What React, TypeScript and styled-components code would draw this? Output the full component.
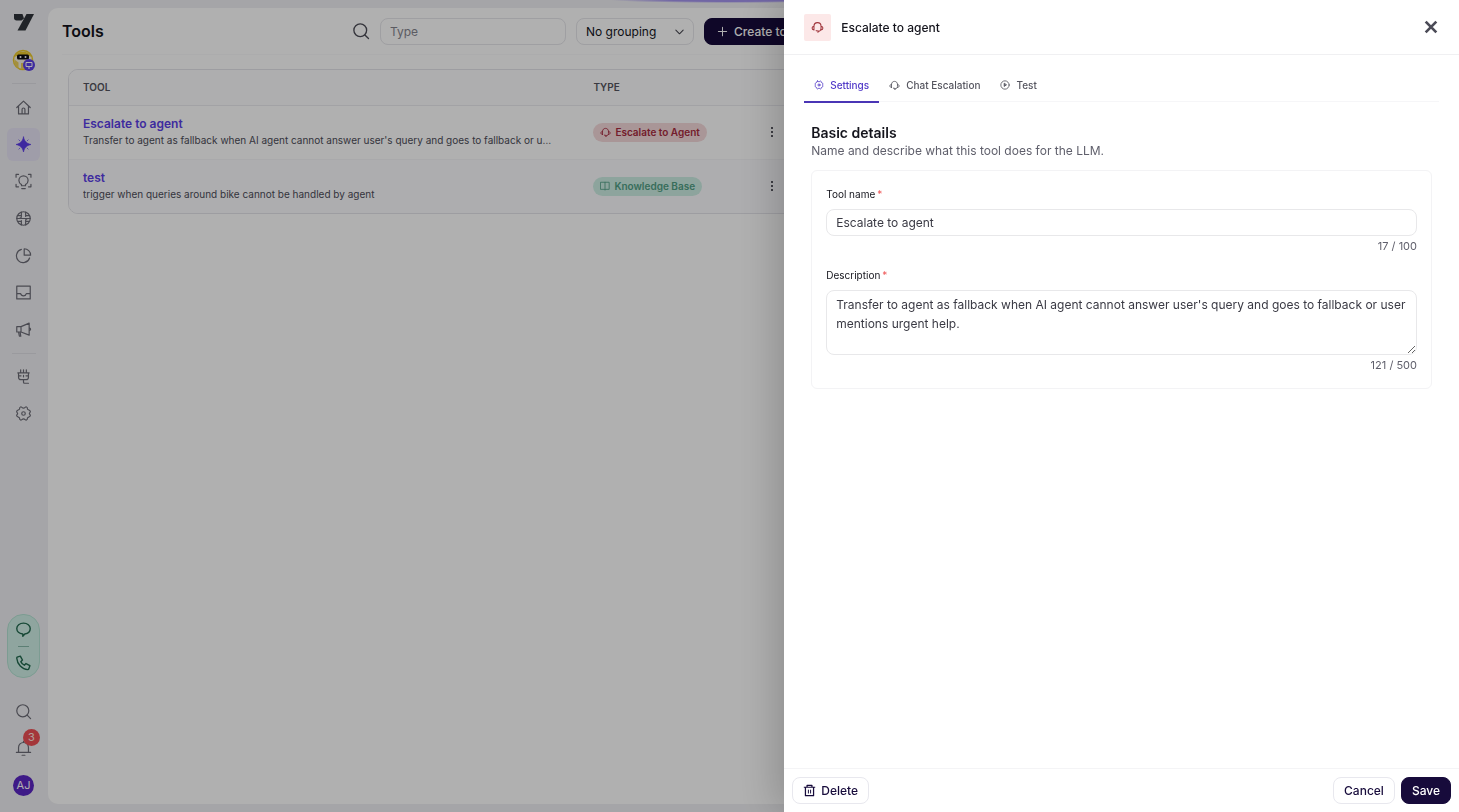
import React, { useState } from "react";
import styled, { createGlobalStyle, css } from "styled-components";

const GlobalStyle = createGlobalStyle`
  *, *::before, *::after { box-sizing: border-box; }
  body {
    margin: 0;
    font-family: Inter, "Liberation Sans", sans-serif;
    font-size: 12px;
    color: #14141c;
    background: #f0f0f3;
  }
  button, input, select, textarea { font: inherit; color: inherit; margin: 0; }
  h1, h2, p { margin: 0; }
`;

/* ---------- icons ---------- */

type IconProps = { size?: number; weight?: number; children?: React.ReactNode };

const Icon = ({ size = 17, weight = 1.7, children }: IconProps) => (
  <svg
    width={size}
    height={size}
    viewBox="0 0 24 24"
    fill="none"
    stroke="currentColor"
    strokeWidth={weight}
    strokeLinecap="round"
    strokeLinejoin="round"
    aria-hidden="true"
  >
    {children}
  </svg>
);

const SearchIcon = (p: IconProps) => (
  <Icon {...p}>
    <circle cx="11" cy="11" r="8.5" />
    <path d="M17.2 17.2 22 22" />
  </Icon>
);
const HomeIcon = () => (
  <Icon>
    <path d="M2.500 12 12 3l9.500 9M5 10v11h14V10M10 21v-6.500c0-1 .8-1.800 2-1.800s2 .8 2 1.800V21" />
  </Icon>
);
const SparkIcon = () => (
  <Icon weight={1}>
    <path
      fill="currentColor"
      d="M12 1.500c1.400 6.200 4 9 10.500 10.500-6.500 1.500-9.100 4.300-10.500 10.500-1.400-6.200-4-9-10.500-10.500 6.500-1.500 9.100-4.300 10.500-10.500z"
    />
    <path d="M5.500 5.500l1.500 1.500M18.500 5.500 17 7M5.500 18.500 7 17M18.500 18.500 17 17" />
  </Icon>
);
const BulbIcon = () => (
  <Icon>
    <path d="M9.200 18v-1.600C7.300 15.300 5.500 13.300 5.500 10.500a6.500 6.500 0 0 1 13 0c0 2.800-1.800 4.800-3.700 5.900V18zM9.500 22h5" />
    <path d="M1.500 6V2H5M22.500 6V2H19M1.500 16v3.500H5M22.500 16v3.500H19" />
  </Icon>
);
const GlobeIcon = () => (
  <Icon>
    <circle cx="12" cy="12" r="9.500" />
    <path d="M2.500 12h19M9 3v6.500a2 2 0 0 1-2 2M9 21v-6M15 3v6M15 21v-6.500a2 2 0 0 1 2-2M4 8h5M15 8h5M4 16h5M15 16h5" />
  </Icon>
);
const PieIcon = () => (
  <Icon>
    <path d="M13 2.500a9 9 0 0 1 9 9h-9z" />
    <path d="M9 3.400A9.500 9.500 0 1 0 20.600 15.500" />
  </Icon>
);
const InboxIcon = () => (
  <Icon>
    <path d="M2.500 3h19v18h-19zM2.500 13.500H8c.5 2 2 3.200 4 3.200s3.500-1.200 4-3.200h5.500" />
  </Icon>
);
const MegaphoneIcon = () => (
  <Icon>
    <path d="M2.500 8h6L20 3v17L8.500 15.500h-6zM8.500 8v7.500M5 15.500l1.200 6h2l-1-6M20 9.500c1.300.3 2 1.100 2 2s-.7 1.700-2 2" />
  </Icon>
);
const PlugIcon = () => (
  <Icon>
    <path d="M8 2.500V7M12 2.500V7M16 2.500V7M4 7h16M5 7v6c0 2 1.500 3.500 3.500 3.500h7c2 0 3.500-1.500 3.500-3.500V7M5 11h3.500M15.500 11H19M12 10.500v2M12 16.500V20c0 1 .6 1.500 1.500 1.500H19" />
  </Icon>
);
const GearIcon = ({ size = 17, weight = 1.7 }: IconProps) => (
  <Icon size={size} weight={weight}>
    <path d="M8.300 2.500c1.200 0 1.800 1.900 3.700 1.900s2.500-1.900 3.700-1.900c1.600.6 2.200 1.600 1.900 3.200 1 1.600 3.300 1.300 4 3 .4 1.600-1.300 2-1.300 3.300s1.700 1.700 1.300 3.300c-.7 1.700-3 1.400-4 3 .3 1.600-.3 2.600-1.900 3.200-1.200 0-1.800-1.900-3.700-1.900s-2.500 1.900-3.700 1.900c-1.600-.6-2.200-1.600-1.900-3.200-1-1.600-3.300-1.300-4-3-.4-1.600 1.300-2 1.300-3.300S2 10.300 2.400 8.700c.7-1.700 3-1.400 4-3-.3-1.600.3-2.600 1.900-3.200z" />
    <circle cx="12" cy="12" r="2.500" />
  </Icon>
);
const HeadsetIcon = ({ size = 12, weight = 1.900 }: IconProps) => (
  <Icon size={size} weight={weight}>
    <path d="M5.500 16.500V9.800C5.500 5.800 8.300 3 12 3s6.500 2.800 6.500 6.800V14c0 3-2 5-5 5.500M5.500 9.500C3.300 9.800 2 11 2 13s1.300 3.200 3.500 3.500M18.500 9.500c2.200.3 3.500 1.500 3.500 3.500s-1.300 3.200-3.500 3.500M9.500 17.800l4 .7-.7 2.500" />
  </Icon>
);
const BookIcon = () => (
  <Icon size={10} weight={2}>
    <path d="M2 3h20v17h-8.500L12 22l-1.500-2H2zM12 3v18" />
  </Icon>
);
const PlayIcon = () => (
  <Icon size={10} weight={2}>
    <circle cx="12" cy="12" r="10" />
    <path fill="currentColor" d="M10 8.500v7l5-3.500z" />
  </Icon>
);
const BubbleIcon = () => (
  <Icon weight={2}>
    <path d="M12 3c5.500 0 9.500 3.300 9.500 7.700 0 4-3.200 7.100-7.700 7.600L11 21.500v-3.200C6 18 2.500 14.900 2.500 10.700 2.500 6.300 6.500 3 12 3z" />
  </Icon>
);
const PhoneIcon = () => (
  <Icon weight={2}>
    <path d="M3 4.500 7.500 3l3 5.500-2.300 2.300c1 2.200 2.800 4 5 5l2.300-2.300 5.500 3-1.500 4.500c-.3.600-.8 1-1.500 1C10 21.500 3 14 2.500 6c0-.7.100-1.200.5-1.500z" />
  </Icon>
);
const BellIcon = () => (
  <Icon>
    <path d="M5 17.500V10.500a7 7 0 0 1 14 0v7M2 17.500h20M10 21.500h4M12 3.500V2" />
  </Icon>
);
const PlusIcon = () => (
  <Icon size={11} weight={2.200}>
    <path d="M12 3v18M3 12h18" />
  </Icon>
);
const ChevronIcon = () => (
  <Icon size={11} weight={2.200}>
    <path d="m4 9 8 8 8-8" />
  </Icon>
);
const CloseIcon = () => (
  <Icon size={16} weight={4}>
    <path strokeLinecap="butt" d="M4 4l16 16M20 4 4 20" />
  </Icon>
);
const DotsIcon = () => (
  <svg width="4" height="12" viewBox="0 0 4 12" fill="currentColor" aria-hidden="true">
    <circle cx="2" cy="2" r="1.100" />
    <circle cx="2" cy="6" r="1.100" />
    <circle cx="2" cy="10" r="1.100" />
  </svg>
);
const TrashIcon = () => (
  <Icon size={13} weight={2.300}>
    <path strokeLinecap="butt" d="M1.500 6h21M7.500 6V2.500h9V6M4.500 6v15.500h15V6" />
    <path strokeLinecap="butt" strokeWidth="1.800" d="M10 10.500v7M14 10.500v7" />
  </Icon>
);
const Logo = () => (
  <svg width="20" height="17" viewBox="0 0 20 17" fill="#2f343b" aria-hidden="true">
    <path d="M0 0h8.500L10 4.500 7.500 6.500H2.500C1 6.500 0 5.500 0 4z" />
    <path d="M12.500 0H20L11.500 16.500H3.500z" />
  </svg>
);
const BotAvatar = () => (
  <svg width="24" height="24" viewBox="0 0 24 24" aria-hidden="true">
    <circle cx="11" cy="11" r="9.500" fill="#f7f2df" stroke="#ecc92a" strokeWidth="1.500" />
    <path d="M2.500 8C5 1 17 1 19.500 8l-2-1H4.500z" fill="#ecc92a" />
    <path d="M2.500 10.500v5l4 4v-6zM9 14h3v6H9z" fill="#ecd05a" />
    <rect x="5" y="5.500" width="12" height="5" rx="1.500" fill="#0c0c14" />
    <circle cx="8.500" cy="8" r="1" fill="#ffffff" />
    <circle cx="13.500" cy="8" r="1" fill="#ffffff" />
    <circle cx="17" cy="16" r="6" fill="#5b3fe6" />
    <path d="M14 13.500h6v4h-6zM16 19h2" fill="none" stroke="#ffffff" strokeWidth="1" />
  </svg>
);

/* ---------- page behind the drawer ---------- */

const Shell = styled.div`
  display: flex;
  height: 100vh;
  padding: 8px 8px 8px 0;
  overflow: hidden;
`;

const TopGlow = styled.div`
  position: absolute;
  top: 0;
  left: 50%;
  width: 240px;
  height: 6px;
  transform: translateX(-50%);
  background: radial-gradient(ellipse 50% 50% at 50% 0, #a494f0 0 50%, transparent 100%);
`;

const Sidebar = styled.aside`
  display: flex;
  flex: none;
  flex-direction: column;
  align-items: center;
  width: 48px;
  padding: 6px 1px 2px 0;
  color: #6c6c77;
`;

const LogoLink = styled.a`
  display: flex;
  margin-bottom: 18px;
`;

const BotButton = styled.button`
  display: flex;
  padding: 0;
  border: 0;
  background: none;
`;

const Divider = styled.hr<{ $tight?: boolean }>`
  width: 24px;
  height: 1px;
  margin: ${(p) => (p.$tight ? "7px 0 6px" : "10px 0 7px")};
  border: 0;
  background: #dfdfe5;
`;

const Nav = styled.nav`
  display: flex;
  flex-direction: column;
  align-items: center;
  gap: 4px;
`;

const NavLink = styled.a<{ $active?: boolean }>`
  display: grid;
  place-items: center;
  width: 33px;
  height: 33px;
  border-radius: 6px;
  color: ${(p) => (p.$active ? "#5b3ae8" : "inherit")};
  background: ${(p) => (p.$active ? "#e7e4f5" : "none")};
`;

const SidebarFoot = styled.div`
  display: flex;
  flex-direction: column;
  align-items: center;
  gap: 4px;
  margin-top: auto;
`;

const ChannelPill = styled.div`
  display: flex;
  flex-direction: column;
  align-items: center;
  justify-content: space-between;
  width: 33px;
  height: 64px;
  margin-bottom: 13px;
  padding: 6px 0;
  border: 1px solid #b4e2d4;
  border-radius: 16px;
  color: #22694f;
  background: #cff0e6;
`;

const PillButton = styled.button`
  display: flex;
  padding: 0;
  border: 0;
  background: none;
`;

const PillRule = styled.span`
  width: 11px;
  height: 1px;
  background: #86b9a8;
`;

const FootButton = styled.button`
  position: relative;
  display: grid;
  place-items: center;
  width: 33px;
  height: 33px;
  padding: 0;
  border: 0;
  background: none;
`;

const CountBadge = styled.span`
  position: absolute;
  top: -3px;
  right: 0;
  width: 17px;
  height: 17px;
  border-radius: 50%;
  font-size: 11px;
  line-height: 17px;
  text-align: center;
  color: #ffe9e0;
  background: #ee4f55;
`;

const UserDot = styled.span`
  width: 21px;
  height: 21px;
  border-radius: 50%;
  font-size: 11px;
  line-height: 21px;
  text-align: center;
  color: #ffffff;
  background: #5b26c4;
`;

const Main = styled.main`
  flex: 1;
  min-width: 0;
  border-radius: 10px;
  background: #ffffff;
`;

const MainHeader = styled.header`
  display: flex;
  align-items: center;
  gap: 10px;
  height: 47px;
  margin: 0 14px;
  border-bottom: 1px solid #f9f9fb;
`;

const PageTitle = styled.h1`
  flex: 0 0 280px;
  font-size: 16px;
  font-weight: 600;
  line-height: 20px;
`;

const SearchLabel = styled.label`
  display: flex;
  align-items: center;
  gap: 10px;
  color: #4c4c56;
`;

const control = css`
  height: 27px;
  border: 1px solid #e6e6eb;
  border-radius: 8px;
  background: #ffffff;
`;

const SearchInput = styled.input`
  ${control}
  width: 186px;
  padding: 0 9px;
  &::placeholder { color: #85858f; }
`;

const SelectBox = styled.div`
  display: grid;
  align-items: center;
  width: 118px;
  > * { grid-area: 1 / 1; }
  > svg { justify-self: end; margin-right: 9px; color: #44444e; pointer-events: none; }
`;

const Select = styled.select`
  ${control}
  width: 100%;
  padding: 0 9px;
  appearance: none;
`;

const Button = styled.button<{ $primary?: boolean }>`
  display: inline-flex;
  align-items: center;
  justify-content: center;
  gap: 5px;
  height: 27px;
  padding: 0 10px;
  border: 1px solid ${(p) => (p.$primary ? "#170b3b" : "#e8e8ee")};
  border-radius: 8px;
  font-weight: 500;
  white-space: nowrap;
  color: ${(p) => (p.$primary ? "#ffffff" : "#170b3b")};
  background: ${(p) => (p.$primary ? "#170b3b" : "#ffffff")};
`;

const CreateButton = styled(Button)`
  gap: 6px;
  padding: 0 12px;
`;

const TableCard = styled.div`
  margin: 14px 20px;
  border: 1px solid #e4e4ea;
  border-radius: 10px;
  overflow: hidden;
`;

const Table = styled.table`
  width: 100%;
  border-collapse: collapse;
  table-layout: fixed;
`;

const HeadCell = styled.th<{ $width?: string }>`
  width: ${(p) => p.$width ?? "auto"};
  height: 35px;
  padding: 0 14px;
  border-bottom: 1px solid #ebebf0;
  font-size: 10px;
  font-weight: 600;
  text-align: left;
  color: #55555f;
  background: #fdfdfe;
`;

const Row = styled.tr<{ $tint?: boolean }>`
  height: 54px;
  background: ${(p) => (p.$tint ? "#fbfbfe" : "#ffffff")};
  & + & { border-top: 1px solid #f5f5f8; }
`;

const Cell = styled.td`
  padding: 0 14px;
`;

const WideCell = styled(Cell)`
  padding-right: 25px;
`;

const ToolLink = styled.a`
  display: block;
  font-weight: 600;
  line-height: 16px;
  text-decoration: none;
  color: #5b3fe6;
`;

const ToolText = styled.p`
  overflow: hidden;
  font-size: 10px;
  line-height: 16px;
  white-space: nowrap;
  text-overflow: ellipsis;
  color: #4d4d59;
`;

const Tag = styled.span<{ $tone: "red" | "green" }>`
  display: flex;
  align-items: center;
  gap: 4px;
  width: max-content;
  height: 19px;
  padding: 0 7px;
  border-radius: 10px;
  font-size: 10px;
  font-weight: 600;
  white-space: nowrap;
  color: ${(p) => (p.$tone === "red" ? "#a82a40" : "#519f85")};
  background: ${(p) => (p.$tone === "red" ? "#f5dadb" : "#cdeee4")};
`;

const MenuButton = styled.button`
  display: flex;
  padding: 0;
  border: 0;
  color: #33333d;
  background: none;
`;

/* ---------- drawer ---------- */

const Scrim = styled.div`
  position: fixed;
  inset: 0;
  background: rgba(0, 0, 0, 0.31);
`;

const Drawer = styled.section`
  position: fixed;
  inset: 0 0 0 auto;
  display: flex;
  flex-direction: column;
  width: 46.25%;
  background: #ffffff;
  box-shadow: -6px 0 40px rgba(0, 0, 0, 0.22);
`;

const DrawerHeader = styled.header`
  display: flex;
  align-items: center;
  gap: 10px;
  height: 55px;
  padding: 0 20px;
  border-bottom: 1px solid #f0f0f2;
`;

const IconTile = styled.span`
  display: grid;
  place-items: center;
  width: 27px;
  height: 27px;
  border-radius: 2px;
  color: #a0353c;
  background: #fce8e8;
`;

const DrawerTitle = styled.h2`
  flex: 1;
  font-size: 12px;
  font-weight: 500;
`;

const CloseButton = styled.button`
  display: flex;
  padding: 0;
  border: 0;
  color: #4b4b57;
  background: none;
`;

const DrawerBody = styled.div`
  flex: 1;
  padding: 14px 20px;
  overflow: auto;
`;

const Tabs = styled.div`
  display: flex;
  height: 33px;
  border-bottom: 1px solid #f6f6f8;
`;

const Tab = styled.button<{ $active: boolean }>`
  display: flex;
  align-items: center;
  gap: 6px;
  height: 34px;
  padding: 0 10px;
  border: 0;
  border-bottom: 2px solid ${(p) => (p.$active ? "#4a35b5" : "transparent")};
  font-size: 10px;
  font-weight: 500;
  color: ${(p) => (p.$active ? "#5038c8" : "#55555f")};
  background: none;
`;

const Form = styled.form`
  padding: 22px 7px 0;
`;

const SectionTitle = styled.h2`
  font-size: 14px;
  font-weight: 600;
  line-height: 18px;
`;

const SectionText = styled.p`
  line-height: 18px;
  color: #5f5f6b;
`;

const FieldCard = styled.div`
  display: flex;
  flex-direction: column;
  gap: 13px;
  margin-top: 10px;
  padding: 15px 14px;
  border: 1px solid #f3f3f5;
  border-radius: 6px;
`;

const Field = styled.div`
  display: flex;
  flex-direction: column;
`;

const Label = styled.label`
  margin-bottom: 7px;
  font-size: 10px;
  line-height: 16px;
`;

const Required = styled.span`
  margin-left: 2px;
  color: #ef5b5b;
`;

const TextInput = styled.input`
  height: 27px;
  padding: 0 9px;
  border: 1px solid #e8e8ea;
  border-radius: 8px;
  color: #3a3a44;
  background: #ffffff;
`;

const TextArea = styled.textarea`
  height: 65px;
  padding: 4px 9px;
  border: 1px solid #e8e8ea;
  border-radius: 8px;
  line-height: 19px;
  color: #3a3a44;
  background: #ffffff;
  resize: vertical;
`;

const Counter = styled.output`
  margin-top: 2px;
  font-size: 11px;
  line-height: 16px;
  text-align: right;
  color: #5f5f6b;
`;

const DrawerFooter = styled.footer`
  display: flex;
  align-items: center;
  gap: 6px;
  height: 44px;
  padding: 0 8px;
  border-top: 1px solid #f4f4f6;
  > :first-child { margin-right: auto; }
`;

const navItems = [
  { label: "Home", icon: <HomeIcon /> },
  { label: "AI agent", icon: <SparkIcon />, active: true },
  { label: "Insights", icon: <BulbIcon /> },
  { label: "Web", icon: <GlobeIcon /> },
  { label: "Analytics", icon: <PieIcon /> },
  { label: "Inbox", icon: <InboxIcon /> },
  { label: "Campaigns", icon: <MegaphoneIcon /> },
];

const tools = [
  {
    name: "Escalate to agent",
    text: "Transfer to agent as fallback when AI agent cannot answer user's query and goes to fallback or user mentions urgent help.",
    tone: "red" as const,
    type: "Escalate to Agent",
    icon: <HeadsetIcon size={11} />,
  },
  {
    name: "test",
    text: "trigger when queries around bike cannot be handled by agent",
    tone: "green" as const,
    type: "Knowledge Base",
    icon: <BookIcon />,
  },
];

const tabs = [
  { label: "Settings", icon: <GearIcon size={10} weight={2} /> },
  { label: "Chat Escalation", icon: <HeadsetIcon size={11} /> },
  { label: "Test", icon: <PlayIcon /> },
];

export default function App() {
  const [tab, setTab] = useState("Settings");
  const [name, setName] = useState("Escalate to agent");
  const [text, setText] = useState(
    "Transfer to agent as fallback when AI agent cannot answer user's query and goes to fallback or user mentions urgent help."
  );

  return (
    <>
      <GlobalStyle />
      <Shell>
        <TopGlow />
        <Sidebar>
          <LogoLink href="#" aria-label="Dashboard"><Logo /></LogoLink>
          <BotButton type="button" aria-label="Switch bot"><BotAvatar /></BotButton>
          <Divider />
          <Nav>
            {navItems.map((n) => (
              <NavLink key={n.label} href="#" aria-label={n.label} $active={n.active}>{n.icon}</NavLink>
            ))}
          </Nav>
          <Divider $tight />
          <Nav>
            <NavLink href="#" aria-label="Integrations"><PlugIcon /></NavLink>
            <NavLink href="#" aria-label="Settings"><GearIcon /></NavLink>
          </Nav>
          <SidebarFoot>
            <ChannelPill>
              <PillButton type="button" aria-label="Chat"><BubbleIcon /></PillButton>
              <PillRule />
              <PillButton type="button" aria-label="Call"><PhoneIcon /></PillButton>
            </ChannelPill>
            <FootButton type="button" aria-label="Search"><SearchIcon /></FootButton>
            <FootButton type="button" aria-label="Notifications">
              <BellIcon />
              <CountBadge>3</CountBadge>
            </FootButton>
            <FootButton type="button" aria-label="Account"><UserDot>AJ</UserDot></FootButton>
          </SidebarFoot>
        </Sidebar>
        <Main>
          <MainHeader>
            <PageTitle>Tools</PageTitle>
            <SearchLabel>
              <SearchIcon size={18} weight={1.800} />
              <SearchInput type="search" placeholder="Type" aria-label="Search tools" />
            </SearchLabel>
            <SelectBox>
              <Select aria-label="Grouping" defaultValue="none">
                <option value="none">No grouping</option>
                <option value="type">Type</option>
              </Select>
              <ChevronIcon />
            </SelectBox>
            <CreateButton type="button" $primary><PlusIcon />Create tool</CreateButton>
          </MainHeader>
          <TableCard>
            <Table>
              <thead>
                <tr>
                  <HeadCell $width="37.5%">TOOL</HeadCell>
                  <HeadCell $width="13%">TYPE</HeadCell>
                  <HeadCell aria-label="Actions" />
                </tr>
              </thead>
              <tbody>
                {tools.map((t, i) => (
                  <Row key={t.name} $tint={i % 2 === 1}>
                    <WideCell>
                      <ToolLink href="#">{t.name}</ToolLink>
                      <ToolText>{t.text}</ToolText>
                    </WideCell>
                    <Cell><Tag $tone={t.tone}>{t.icon}{t.type}</Tag></Cell>
                    <Cell><MenuButton type="button" aria-label={`Actions for ${t.name}`}><DotsIcon /></MenuButton></Cell>
                  </Row>
                ))}
              </tbody>
            </Table>
          </TableCard>
        </Main>
      </Shell>

      <Scrim />
      <Drawer role="dialog" aria-labelledby="drawer-title">
        <DrawerHeader>
          <IconTile><HeadsetIcon size={13} /></IconTile>
          <DrawerTitle id="drawer-title">Escalate to agent</DrawerTitle>
          <CloseButton type="button" aria-label="Close"><CloseIcon /></CloseButton>
        </DrawerHeader>
        <DrawerBody>
          <Tabs role="tablist">
            {tabs.map((t) => (
              <Tab
                key={t.label}
                type="button"
                role="tab"
                aria-selected={t.label === tab}
                $active={t.label === tab}
                onClick={() => setTab(t.label)}
              >
                {t.icon}
                {t.label}
              </Tab>
            ))}
          </Tabs>
          <Form id="tool-form" onSubmit={(e) => e.preventDefault()}>
            <SectionTitle>Basic details</SectionTitle>
            <SectionText>Name and describe what this tool does for the LLM.</SectionText>
            <FieldCard>
              <Field>
                <Label htmlFor="tool-name">Tool name<Required>*</Required></Label>
                <TextInput id="tool-name" maxLength={100} value={name} onChange={(e) => setName(e.target.value)} />
                <Counter htmlFor="tool-name">{name.length} / 100</Counter>
              </Field>
              <Field>
                <Label htmlFor="tool-text">Description<Required>*</Required></Label>
                <TextArea id="tool-text" maxLength={500} value={text} onChange={(e) => setText(e.target.value)} />
                <Counter htmlFor="tool-text">{text.length} / 500</Counter>
              </Field>
            </FieldCard>
          </Form>
        </DrawerBody>
        <DrawerFooter>
          <Button type="button"><TrashIcon />Delete</Button>
          <Button type="button">Cancel</Button>
          <Button type="submit" form="tool-form" $primary>Save</Button>
        </DrawerFooter>
      </Drawer>
    </>
  );
}
